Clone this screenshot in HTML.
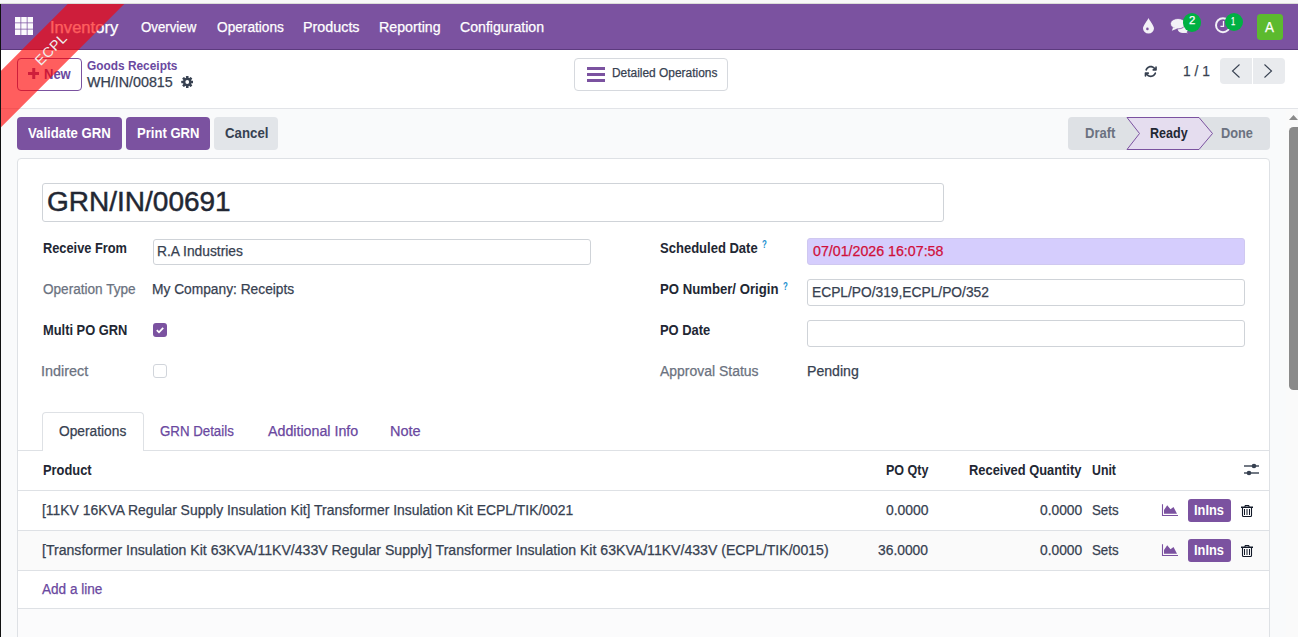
<!DOCTYPE html>
<html><head><meta charset="utf-8"><title>GRN</title>
<style>
html,body{margin:0;padding:0;width:1298px;height:637px;overflow:hidden;background:#f9fafb;font-family:"Liberation Sans",sans-serif;}
.a{position:absolute;box-sizing:border-box;}
.t{position:absolute;white-space:nowrap;line-height:1;transform-origin:0 0;font-family:"Liberation Sans",sans-serif;}
</style></head><body>
<!-- top strip -->
<div class="a" style="left:0;top:0;width:1298px;height:3px;background:#f8f8f8"></div>
<div class="a" style="left:0;top:3px;width:1298px;height:1px;background:#dcddd8"></div>
<!-- navbar -->
<div class="a" style="left:0;top:4px;width:1298px;height:45px;background:#7b52a0"></div>
<div class="a" style="left:0;top:49px;width:1298px;height:1px;background:#5c3a7e"></div>
<!-- control panel -->
<div class="a" style="left:0;top:50px;width:1298px;height:58px;background:#ffffff"></div>
<div class="a" style="left:0;top:108px;width:1298px;height:1px;background:#e2e4e8"></div>
<!-- grid icon -->
<svg class="a" style="left:15px;top:17px" width="18" height="18" viewBox="0 0 18 18" fill="#fbfafd"><rect x="0" y="0" width="5.5" height="5.5"/><rect x="6.25" y="0" width="5.5" height="5.5"/><rect x="12.5" y="0" width="5.5" height="5.5"/><rect x="0" y="6.25" width="5.5" height="5.5"/><rect x="6.25" y="6.25" width="5.5" height="5.5"/><rect x="12.5" y="6.25" width="5.5" height="5.5"/><rect x="0" y="12.5" width="5.5" height="5.5"/><rect x="6.25" y="12.5" width="5.5" height="5.5"/><rect x="12.5" y="12.5" width="5.5" height="5.5"/></svg>
<!-- systray -->
<svg class="a" style="left:1142px;top:18px" width="13" height="16" viewBox="0 0 13 16">
<path d="M6.5 0 C5.6 2.4 1 7.6 1 10.3 A5.5 5.2 0 0 0 12 10.3 C12 7.6 7.4 2.4 6.5 0Z" fill="#f3f1f7"/>
<circle cx="5.4" cy="10.9" r="1.3" fill="#7b52a0"/>
</svg>
<svg class="a" style="left:1170px;top:18px" width="19" height="16" viewBox="0 0 19 16">
<ellipse cx="13" cy="11.6" rx="5.2" ry="3.4" fill="#f3f1f7"/>
<path d="M15.5 13.5 L18 15.2 L12.5 14.6Z" fill="#f3f1f7"/>
<ellipse cx="8" cy="5.7" rx="7.6" ry="5.2" fill="#f3f1f7" stroke="#7b52a0" stroke-width="0.8"/>
<path d="M3.2 9.2 L1.8 12.8 L7.5 10.5Z" fill="#f3f1f7"/>
</svg>
<div class="a" style="left:1182.5px;top:12.8px;width:18.8px;height:18.8px;border-radius:50%;background:#00b043"></div>
<svg class="a" style="left:1215px;top:17px" width="17" height="17" viewBox="0 0 17 17">
<circle cx="8" cy="8.2" r="7" fill="none" stroke="#f3f1f7" stroke-width="2"/>
<path d="M8.5 4 V9.3 H5.5" fill="none" stroke="#f3f1f7" stroke-width="1.3"/>
</svg>
<div class="a" style="left:1224.8px;top:12.8px;width:18.6px;height:18.6px;border-radius:50%;background:#00b043"></div>
<div class="a" style="left:1257px;top:14px;width:26px;height:26px;border-radius:3.5px;background:#5cba2e"></div>
<!-- New button -->
<div class="a" style="left:17px;top:58px;width:65px;height:33px;border:1px solid #7b52a0;border-radius:4px;background:#fff"></div>
<svg class="a" style="left:27.5px;top:68px" width="11.5" height="11" viewBox="0 0 11.5 11"><path d="M4.25 0h3v4h4.25v3h-4.25v4h-3v-4h-4.25v-3h4.25z" fill="#7b52a0"/></svg>
<!-- gear -->
<svg class="a" style="left:180.5px;top:76px" width="12.5" height="12" viewBox="-6 -6 12 12">
<g fill="#374151"><circle r="4.3"/>
<rect x="-1.3" y="-6" width="2.6" height="12" rx="0.5"/>
<rect x="-1.3" y="-6" width="2.6" height="12" rx="0.5" transform="rotate(45)"/>
<rect x="-1.3" y="-6" width="2.6" height="12" rx="0.5" transform="rotate(90)"/>
<rect x="-1.3" y="-6" width="2.6" height="12" rx="0.5" transform="rotate(135)"/></g>
<circle r="1.9" fill="#fff"/>
</svg>
<!-- Detailed operations button -->
<div class="a" style="left:574px;top:58px;width:154px;height:33px;border:1px solid #d6d9de;border-radius:4px;background:#fff"></div>
<div class="a" style="left:587px;top:67px;width:18px;height:3px;background:#7b52a0"></div>
<div class="a" style="left:587px;top:73px;width:18px;height:3px;background:#7b52a0"></div>
<div class="a" style="left:587px;top:79px;width:18px;height:3px;background:#7b52a0"></div>
<!-- refresh -->
<svg class="a" style="left:1143.5px;top:64.5px" width="13.5" height="13" viewBox="0 0 512 512">
<path fill="#374151" d="M105.1 202.6c7.7-21.8 20.2-42.3 37.8-59.8c62.5-62.5 163.8-62.5 226.3 0L386.3 160H352c-17.7 0-32 14.3-32 32s14.3 32 32 32H463.5c0 0 0 0 0 0h.4c17.7 0 32-14.3 32-32V80c0-17.7-14.3-32-32-32s-32 14.3-32 32v35.2L414.4 97.6c-87.5-87.5-229.3-87.5-316.8 0C73.2 122 55.6 150.7 44.8 181.4c-5.9 16.7 2.9 34.9 19.5 40.8s34.9-2.9 40.8-19.5zM39 289.3c-5 1.5-9.8 4.2-13.7 8.2c-4 4-6.7 8.8-8.1 14c-.3 1.2-.6 2.5-.8 3.8c-.3 1.7-.4 3.4-.4 5.1V432c0 17.7 14.3 32 32 32s32-14.3 32-32V396.9l17.6 17.5 0 0c87.5 87.4 229.3 87.4 316.7 0c24.4-24.4 42.1-53.1 52.9-83.7c5.9-16.7-2.9-34.9-19.5-40.8s-34.9 2.9-40.8 19.5c-7.7 21.8-20.2 42.3-37.8 59.8c-62.5 62.5-163.8 62.5-226.3 0l-.1-.1L125.6 352H160c17.7 0 32-14.3 32-32s-14.3-32-32-32H48.4c-1.6 0-3.2 .1-4.8 .3s-3.1 .5-4.6 1z"/>
</svg>
<!-- pager -->
<div class="a" style="left:1220px;top:58px;width:65px;height:26px;border-radius:4px;background:#e9ebee"></div>
<div class="a" style="left:1252px;top:58px;width:1px;height:26px;background:#fff"></div>
<svg class="a" style="left:1231px;top:64px" width="10" height="14" viewBox="0 0 10 14"><path d="M8.5 0.5 L1.5 7 L8.5 13.5" fill="none" stroke="#374151" stroke-width="1.1"/></svg>
<svg class="a" style="left:1263px;top:64px" width="10" height="14" viewBox="0 0 10 14"><path d="M1.5 0.5 L8.5 7 L1.5 13.5" fill="none" stroke="#374151" stroke-width="1.1"/></svg>

<!-- action buttons -->
<div class="a" style="left:17px;top:117px;width:105px;height:33px;border-radius:4px;background:#7b52a0"></div>
<div class="a" style="left:126px;top:117px;width:84px;height:33px;border-radius:4px;background:#7b52a0"></div>
<div class="a" style="left:214px;top:117px;width:64px;height:33px;border-radius:4px;background:#e2e5e9"></div>
<!-- statusbar -->
<div class="a" style="left:1068px;top:117px;width:202px;height:33px;border-radius:4px;background:#dee1e5"></div>
<svg class="a" style="left:1126px;top:117px" width="88" height="33" viewBox="0 0 88 33">
<path d="M1 0.5 H73 L86.5 16.5 L73 32.5 H1 L13.5 16.5 Z" fill="#e5ddef" stroke="#7b52a0" stroke-width="1"/>
</svg>

<!-- sheet -->
<div class="a" style="left:17px;top:158px;width:1253px;height:500px;border:1px solid #dee1e5;border-radius:4px;background:#fff"></div>
<!-- title input -->
<div class="a" style="left:42px;top:183px;width:902px;height:39px;border:1px solid #cfd3d8;border-radius:3px"></div>
<!-- inputs -->
<div class="a" style="left:153px;top:238.5px;width:438px;height:26.5px;border:1px solid #cfd3d8;border-radius:3px"></div>
<div class="a" style="left:807px;top:238px;width:438px;height:26.5px;border:1px solid #cfc8f0;border-radius:3px;background:#d5cdfd"></div>
<div class="a" style="left:807px;top:279px;width:438px;height:26.5px;border:1px solid #cfd3d8;border-radius:3px"></div>
<div class="a" style="left:807px;top:320px;width:438px;height:26.5px;border:1px solid #cfd3d8;border-radius:3px"></div>
<!-- checkboxes -->
<div class="a" style="left:153px;top:323px;width:14px;height:14px;border-radius:3px;background:#7b52a0"></div>
<svg class="a" style="left:153px;top:323px" width="14" height="14" viewBox="0 0 14 14"><path d="M3.8 7.2 L6 9.3 L10.2 4.9" fill="none" stroke="#fff" stroke-width="1.8"/></svg>
<div class="a" style="left:153px;top:364px;width:14px;height:14px;border:1px solid #d1d5db;border-radius:3px;background:#fff"></div>

<!-- tabs -->
<div class="a" style="left:18px;top:450px;width:1251px;height:1px;background:#dee1e5"></div>
<div class="a" style="left:42px;top:412px;width:102px;height:39px;border:1px solid #dee1e5;border-bottom:none;border-radius:4px 4px 0 0;background:#fff"></div>
<!-- table -->
<div class="a" style="left:18px;top:490px;width:1251px;height:1px;background:#dee1e5"></div>
<div class="a" style="left:18px;top:531px;width:1251px;height:39px;background:#fafafa"></div>
<div class="a" style="left:18px;top:530px;width:1251px;height:1px;background:#dee1e5"></div>
<div class="a" style="left:18px;top:570px;width:1251px;height:1px;background:#dee1e5"></div>
<div class="a" style="left:18px;top:609px;width:1251px;height:40px;background:#fbfbfc"></div>
<div class="a" style="left:18px;top:608px;width:1251px;height:1px;background:#dee1e5"></div>
<!-- sliders icon -->
<svg class="a" style="left:1244px;top:463px" width="15" height="13" viewBox="0 0 15 13">
<rect x="0" y="2.3" width="15" height="1.4" fill="#374151"/><circle cx="10" cy="3" r="2.3" fill="#374151"/>
<rect x="0" y="9.3" width="15" height="1.4" fill="#374151"/><circle cx="5" cy="10" r="2.3" fill="#374151"/>
</svg>
<!-- row icons -->
<svg class="a" style="left:1161px;top:504px" width="18" height="13" viewBox="0 0 18 13">
<path d="M1.5 0.3 V11.5 H17" fill="none" stroke="#7b52a0" stroke-width="1.1"/>
<path d="M3 9.8 V6 L6.2 1.2 L9.5 5.2 L12.5 3 L16 9.8Z" fill="#7b52a0"/>
</svg>
<svg class="a" style="left:1161px;top:544px" width="18" height="13" viewBox="0 0 18 13">
<path d="M1.5 0.3 V11.5 H17" fill="none" stroke="#7b52a0" stroke-width="1.1"/>
<path d="M3 9.8 V6 L6.2 1.2 L9.5 5.2 L12.5 3 L16 9.8Z" fill="#7b52a0"/>
</svg>
<div class="a" style="left:1188px;top:499px;width:43px;height:23px;border-radius:3px;background:#7b52a0"></div>
<div class="a" style="left:1188px;top:539px;width:43px;height:23px;border-radius:3px;background:#7b52a0"></div>
<svg class="a" style="left:1241px;top:504px" width="12" height="14" viewBox="0 0 12 14">
<path d="M4 3 V1.5 H8 V3" fill="none" stroke="#111827" stroke-width="1"/>
<rect x="0" y="2.5" width="12" height="1.5" fill="#111827"/>
<path d="M1.5 4 V11.5 Q1.5 12.5 2.5 12.5 H9.5 Q10.5 12.5 10.5 11.5 V4" fill="none" stroke="#111827" stroke-width="1.1"/>
<rect x="3" y="5" width="1" height="6" fill="#111827"/><rect x="5.5" y="5" width="1" height="6" fill="#111827"/><rect x="8" y="5" width="1" height="6" fill="#111827"/>
</svg>
<svg class="a" style="left:1241px;top:544px" width="12" height="14" viewBox="0 0 12 14">
<path d="M4 3 V1.5 H8 V3" fill="none" stroke="#111827" stroke-width="1"/>
<rect x="0" y="2.5" width="12" height="1.5" fill="#111827"/>
<path d="M1.5 4 V11.5 Q1.5 12.5 2.5 12.5 H9.5 Q10.5 12.5 10.5 11.5 V4" fill="none" stroke="#111827" stroke-width="1.1"/>
<rect x="3" y="5" width="1" height="6" fill="#111827"/><rect x="5.5" y="5" width="1" height="6" fill="#111827"/><rect x="8" y="5" width="1" height="6" fill="#111827"/>
</svg>

<span class="t" style="left:50.49px;top:18.80px;font-size:16.5px;font-weight:400;color:#ffffff;transform:scaleX(1.0056);-webkit-text-stroke:0.25px #ffffff;">Inventory</span>
<span class="t" style="left:140.50px;top:20.00px;font-size:14px;font-weight:400;color:#ffffff;transform:scaleX(0.9471);-webkit-text-stroke:0.25px #ffffff;">Overview</span>
<span class="t" style="left:216.90px;top:20.00px;font-size:14px;font-weight:400;color:#ffffff;transform:scaleX(0.9769);-webkit-text-stroke:0.25px #ffffff;">Operations</span>
<span class="t" style="left:303.48px;top:20.00px;font-size:14px;font-weight:400;color:#ffffff;transform:scaleX(1.0231);-webkit-text-stroke:0.25px #ffffff;">Products</span>
<span class="t" style="left:379.39px;top:20.00px;font-size:14px;font-weight:400;color:#ffffff;transform:scaleX(1.0150);-webkit-text-stroke:0.25px #ffffff;">Reporting</span>
<span class="t" style="left:460.30px;top:20.00px;font-size:14px;font-weight:400;color:#ffffff;transform:scaleX(1.0098);-webkit-text-stroke:0.25px #ffffff;">Configuration</span>
<span class="t" style="left:1189.00px;top:15.30px;font-size:11px;font-weight:400;color:#ffffff;transform:scaleX(1.0333);-webkit-text-stroke:0.25px #ffffff;">2</span>
<span class="t" style="left:1231.40px;top:15.50px;font-size:11px;font-weight:400;color:#ffffff;transform:scaleX(0.6833);-webkit-text-stroke:0.25px #ffffff;">1</span>
<span class="t" style="left:1265.40px;top:19.90px;font-size:14px;font-weight:400;color:#ffffff;transform:scaleX(0.9600);-webkit-text-stroke:0.25px #ffffff;">A</span>
<span class="t" style="left:43.60px;top:66.50px;font-size:14px;font-weight:700;color:#6a48a0;transform:scaleX(0.9274);">New</span>
<span class="t" style="left:86.50px;top:59.80px;font-size:12.5px;font-weight:700;color:#6a48a0;transform:scaleX(0.9506);">Goods Receipts</span>
<span class="t" style="left:86.70px;top:74.90px;font-size:14.5px;font-weight:400;color:#374151;transform:scaleX(0.9854);-webkit-text-stroke:0.25px #374151;">WH/IN/00815</span>
<span class="t" style="left:611.55px;top:66.80px;font-size:12.5px;font-weight:400;color:#374151;transform:scaleX(0.9540);-webkit-text-stroke:0.25px #374151;">Detailed Operations</span>
<span class="t" style="left:1183.35px;top:64.10px;font-size:14.5px;font-weight:400;color:#374151;transform:scaleX(0.9503);-webkit-text-stroke:0.25px #374151;">1 / 1</span>
<span class="t" style="left:28.30px;top:126.00px;font-size:14.5px;font-weight:700;color:#ffffff;transform:scaleX(0.9096);">Validate GRN</span>
<span class="t" style="left:137.00px;top:126.00px;font-size:14.5px;font-weight:700;color:#ffffff;transform:scaleX(0.9011);">Print GRN</span>
<span class="t" style="left:224.50px;top:126.00px;font-size:14.5px;font-weight:700;color:#374151;transform:scaleX(0.9136);">Cancel</span>
<span class="t" style="left:1085.40px;top:125.50px;font-size:14.5px;font-weight:700;color:#6b7280;transform:scaleX(0.8998);">Draft</span>
<span class="t" style="left:1149.50px;top:125.50px;font-size:14.5px;font-weight:700;color:#222733;transform:scaleX(0.8652);">Ready</span>
<span class="t" style="left:1221.00px;top:125.50px;font-size:14.5px;font-weight:700;color:#6b7280;transform:scaleX(0.8816);">Done</span>
<span class="t" style="left:46.76px;top:189.00px;font-size:27px;font-weight:400;color:#222733;transform:scaleX(1.0373);-webkit-text-stroke:0.45px #222733;">GRN/IN/00691</span>
<span class="t" style="left:42.70px;top:241.00px;font-size:14px;font-weight:700;color:#222733;transform:scaleX(0.9149);">Receive From</span>
<span class="t" style="left:157.01px;top:243.70px;font-size:14px;font-weight:400;color:#374151;transform:scaleX(0.9859);-webkit-text-stroke:0.25px #374151;">R.A Industries</span>
<span class="t" style="left:42.70px;top:281.80px;font-size:14px;font-weight:400;color:#6b7280;transform:scaleX(0.9704);-webkit-text-stroke:0.25px #6b7280;">Operation Type</span>
<span class="t" style="left:152.02px;top:281.80px;font-size:14px;font-weight:400;color:#374151;transform:scaleX(0.9825);-webkit-text-stroke:0.25px #374151;">My Company: Receipts</span>
<span class="t" style="left:42.70px;top:322.70px;font-size:14px;font-weight:700;color:#222733;transform:scaleX(0.9197);">Multi PO GRN</span>
<span class="t" style="left:41.17px;top:363.60px;font-size:14px;font-weight:400;color:#6b7280;transform:scaleX(1.0284);-webkit-text-stroke:0.25px #6b7280;">Indirect</span>
<span class="t" style="left:659.70px;top:240.70px;font-size:14px;font-weight:700;color:#222733;transform:scaleX(0.9302);">Scheduled Date</span>
<span class="t" style="left:762.00px;top:239.20px;font-size:11px;font-weight:700;color:#1a8fd0;transform:scaleX(0.7143);">?</span>
<span class="t" style="left:812.80px;top:243.80px;font-size:14px;font-weight:400;color:#d0103a;transform:scaleX(1.0150);-webkit-text-stroke:0.25px #d0103a;">07/01/2026 16:07:58</span>
<span class="t" style="left:659.70px;top:282.30px;font-size:14px;font-weight:700;color:#222733;transform:scaleX(0.9397);">PO Number/ Origin</span>
<span class="t" style="left:782.50px;top:280.60px;font-size:11px;font-weight:700;color:#1a8fd0;transform:scaleX(0.7143);">?</span>
<span class="t" style="left:811.82px;top:285.40px;font-size:14px;font-weight:400;color:#374151;transform:scaleX(0.9839);-webkit-text-stroke:0.25px #374151;">ECPL/PO/319,ECPL/PO/352</span>
<span class="t" style="left:659.70px;top:322.80px;font-size:14px;font-weight:700;color:#222733;transform:scaleX(0.9236);">PO Date</span>
<span class="t" style="left:659.70px;top:363.60px;font-size:14px;font-weight:400;color:#6b7280;transform:scaleX(0.9966);-webkit-text-stroke:0.25px #6b7280;">Approval Status</span>
<span class="t" style="left:806.99px;top:363.60px;font-size:14px;font-weight:400;color:#374151;transform:scaleX(1.0082);-webkit-text-stroke:0.25px #374151;">Pending</span>
<span class="t" style="left:59.00px;top:423.80px;font-size:14px;font-weight:400;color:#374151;transform:scaleX(0.9827);-webkit-text-stroke:0.25px #374151;">Operations</span>
<span class="t" style="left:160.20px;top:423.80px;font-size:14px;font-weight:400;color:#6a48a0;transform:scaleX(0.9487);-webkit-text-stroke:0.25px #6a48a0;">GRN Details</span>
<span class="t" style="left:267.60px;top:423.80px;font-size:14px;font-weight:400;color:#6a48a0;transform:scaleX(1.0164);-webkit-text-stroke:0.25px #6a48a0;">Additional Info</span>
<span class="t" style="left:390.36px;top:423.80px;font-size:14px;font-weight:400;color:#6a48a0;transform:scaleX(1.0352);-webkit-text-stroke:0.25px #6a48a0;">Note</span>
<span class="t" style="left:42.50px;top:462.90px;font-size:14px;font-weight:700;color:#222733;transform:scaleX(0.9187);">Product</span>
<span class="t" style="left:885.90px;top:462.90px;font-size:14px;font-weight:700;color:#222733;transform:scaleX(0.8958);">PO Qty</span>
<span class="t" style="left:969.40px;top:462.90px;font-size:14px;font-weight:700;color:#222733;transform:scaleX(0.9202);">Received Quantity</span>
<span class="t" style="left:1092.40px;top:462.90px;font-size:14px;font-weight:700;color:#222733;transform:scaleX(0.8783);">Unit</span>
<span class="t" style="left:41.51px;top:502.80px;font-size:14px;font-weight:400;color:#374151;transform:scaleX(0.9932);-webkit-text-stroke:0.25px #374151;">[11KV 16KVA Regular Supply Insulation Kit] Transformer Insulation Kit ECPL/TIK/0021</span>
<span class="t" style="left:885.90px;top:502.80px;font-size:14px;font-weight:400;color:#374151;transform:scaleX(0.9922);-webkit-text-stroke:0.25px #374151;">0.0000</span>
<span class="t" style="left:1039.60px;top:502.80px;font-size:14px;font-weight:400;color:#374151;transform:scaleX(0.9853);-webkit-text-stroke:0.25px #374151;">0.0000</span>
<span class="t" style="left:1092.40px;top:502.80px;font-size:14px;font-weight:400;color:#374151;transform:scaleX(0.9460);-webkit-text-stroke:0.25px #374151;">Sets</span>
<span class="t" style="left:1194.30px;top:502.80px;font-size:14px;font-weight:700;color:#ffffff;transform:scaleX(0.9154);">InIns</span>
<span class="t" style="left:42.29px;top:542.60px;font-size:14px;font-weight:400;color:#374151;transform:scaleX(1.0068);-webkit-text-stroke:0.25px #374151;">[Transformer Insulation Kit 63KVA/11KV/433V Regular Supply] Transformer Insulation Kit 63KVA/11KV/433V (ECPL/TIK/0015)</span>
<span class="t" style="left:878.40px;top:542.60px;font-size:14px;font-weight:400;color:#374151;transform:scaleX(0.9878);-webkit-text-stroke:0.25px #374151;">36.0000</span>
<span class="t" style="left:1039.60px;top:542.60px;font-size:14px;font-weight:400;color:#374151;transform:scaleX(0.9853);-webkit-text-stroke:0.25px #374151;">0.0000</span>
<span class="t" style="left:1092.40px;top:542.60px;font-size:14px;font-weight:400;color:#374151;transform:scaleX(0.9460);-webkit-text-stroke:0.25px #374151;">Sets</span>
<span class="t" style="left:1194.30px;top:542.60px;font-size:14px;font-weight:700;color:#ffffff;transform:scaleX(0.9154);">InIns</span>
<span class="t" style="left:42.40px;top:581.60px;font-size:14px;font-weight:400;color:#6a48a0;transform:scaleX(0.9683);-webkit-text-stroke:0.25px #6a48a0;">Add a line</span>

<!-- scrollbar -->
<div class="a" style="left:1286px;top:109px;width:12px;height:528px;background:#fafafa"></div>
<svg class="a" style="left:1286px;top:109px" width="12" height="12" viewBox="0 0 12 12"><path d="M3 11 L7.5 6 L12 11Z" fill="#8a8a8a"/></svg>
<div class="a" style="left:1289px;top:127px;width:9px;height:263px;border-radius:4.5px 0 0 4.5px;background:#8a8a8a"></div>
<div class="a" style="left:1293px;top:127px;width:9px;height:263px;border-radius:4.5px;background:#8a8a8a"></div>


<!-- ribbon -->
<div class="a" style="left:0;top:4px;width:200px;height:200px;overflow:hidden">
<div class="a" style="left:-150.25px;top:25.75px;width:400px;height:40.3px;transform:rotate(-45deg);transform-origin:50% 50%;background:rgba(255,0,0,0.63);"></div>
<div class="t" style="left:20.8px;top:37.5px;width:60px;height:14px;text-align:center;font-size:14px;line-height:14px;letter-spacing:0.6px;color:#f0f0f0;transform:rotate(-45deg);transform-origin:50% 50%">ECPL</div>
</div>
<!-- left dark line -->
<div class="a" style="left:0;top:4px;width:1px;height:633px;background:#111"></div>
</body></html>
